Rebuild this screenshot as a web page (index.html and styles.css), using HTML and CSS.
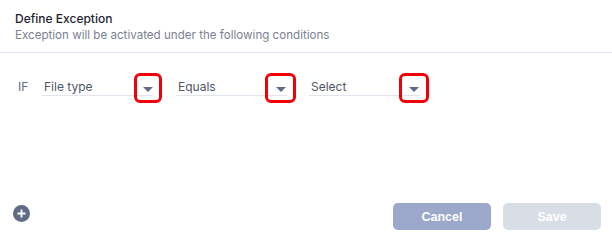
FILE: index.html
```html
<!DOCTYPE html>
<html>
<head>
<meta charset="utf-8">
<link rel="stylesheet" href="styles.css">
</head>
<body>
<div class="panel">
  <header class="head">
    <h1 class="title">Define Exception</h1>
    <p class="sub">Exception will be activated under the following conditions</p>
  </header>
  <div class="body">
    <div class="row">
      <span class="if">IF</span>
      <div class="sel"><span class="val">File type</span><span class="caret"><svg width="10" height="5" viewBox="0 0 10 5"><path d="M0 0H10L5 5Z" fill="#5f6b87"/></svg></span></div>
      <div class="sel sel-mid"><span class="val">Equals</span><span class="caret caret-wide"><svg width="10" height="5" viewBox="0 0 10 5"><path d="M0 0H10L5 5Z" fill="#5f6b87"/></svg></span></div>
      <div class="sel"><span class="val">Select</span><span class="caret caret-mid"><svg width="10" height="5" viewBox="0 0 10 5"><path d="M0 0H10L5 5Z" fill="#5f6b87"/></svg></span></div>
    </div>
  </div>
  <footer class="foot">
    <svg class="add" width="17" height="17" viewBox="0 0 17 17"><circle cx="8.5" cy="8.5" r="8.5" fill="#5f6b87"/><path d="M8.5 4.5v8M4.5 8.5h8" stroke="#fff" stroke-width="1.8"/></svg>
    <div class="btns">
      <button class="btn cancel">Cancel</button>
      <button class="btn save">Save</button>
    </div>
  </footer>
</div>
</body>
</html>
```
FILE: styles.css
```css
html, body { margin: 0; padding: 0; background: #fff; }
body { font-family: Inter, "Noto Sans", sans-serif; width: 612px; height: 239px; overflow: hidden; }
.panel { display: flex; flex-direction: column; height: 239px; }
.head { padding: 10px 15px 0; height: 42px; border-bottom: 1px solid #e3e6f2; }
.title { margin: 0; font-size: 12px; font-weight: 500; color: #1f2430; line-height: 17px; }
.sub { margin: 0; font-size: 11.6px; color: #7a8294; line-height: 17px; }
.body { flex: 1; padding: 20px 0 0 18px; }
.row { display: flex; align-items: flex-start; }
.if { font-size: 12px; color: #5f6b87; width: 24px; line-height: 17px; padding-top: 5px; }
.sel { position: relative; width: 120px; height: 30px; margin-right: 14px; }
.sel-mid { margin-right: 13px; }
.val { display: block; font-size: 12px; color: #4f5666; line-height: 17px; padding: 5px 0 0 2px; width: 109px; border-bottom: 1px solid #e3e5ee; }
.caret { position: absolute; right: 0; top: 0; width: 28px; height: 30px; border: 3px solid #f2000a; border-radius: 6px; box-sizing: border-box; display: flex; align-items: center; justify-content: center; padding-top: 3px; }
.caret-wide { width: 31px; }
.caret-mid { width: 30px; }
.foot { display: flex; justify-content: space-between; align-items: center; padding: 0 11px 9px 13px; }
.add { margin-top: -6px; }
.btns { display: flex; gap: 12px; }
.btn { width: 98px; height: 27px; border: none; border-radius: 5px; color: #fff; font-family: "Liberation Sans", Arial, sans-serif; font-weight: 700; font-size: 12.5px; padding: 0; }
.cancel { background: #9ba8c9; }
.save { background: #d9dde6; }
```
